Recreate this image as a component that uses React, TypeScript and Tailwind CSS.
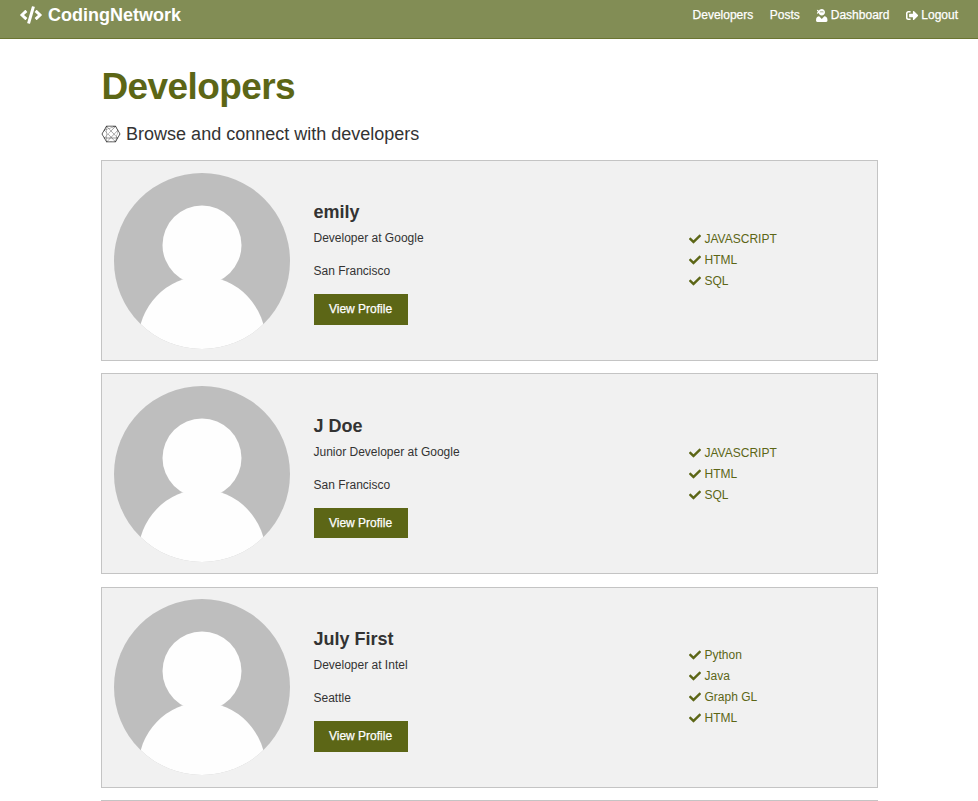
import { FaCode, FaUserNinja, FaConnectdevelop, FaCheck, FaSignOutAlt } from "react-icons/fa";

type Profile = { name: string; job: string; place: string; skills: string[] };

const profiles: Profile[] = [
  { name: "emily", job: "Developer at Google", place: "San Francisco", skills: ["JAVASCRIPT", "HTML", "SQL"] },
  { name: "J Doe", job: "Junior Developer at Google", place: "San Francisco", skills: ["JAVASCRIPT", "HTML", "SQL"] },
  { name: "July First", job: "Developer at Intel", place: "Seattle", skills: ["Python", "Java", "Graph GL", "HTML"] },
];

function Avatar() {
  return (
    <svg viewBox="0 0 176 176" className="size-44 shrink-0 rounded-full">
      <rect width="176" height="176" fill="#bebebe" />
      <circle cx="88" cy="72" r="39.5" fill="#fefefe" />
      <ellipse cx="88" cy="170" rx="64" ry="66.5" fill="#fefefe" />
    </svg>
  );
}

function Navbar() {
  return (
    <nav className="flex h-[39px] items-start justify-between border-b border-[#6b7531] bg-[#828d55] px-5 text-white">
      <a className="flex items-center gap-[6px] pt-[4px] text-[18px] leading-[22px] font-bold">
        <FaCode className="h-[18px] w-[22px]" />
        CodingNetwork
      </a>
      <div className="flex gap-[16.5px] pt-[6px] text-xs leading-[18px] [-webkit-text-stroke:0.25px_white]">
        <a>Developers</a>
        <a>Posts</a>
        <a className="flex items-center gap-[3px]">
          <FaUserNinja className="h-[13px] w-[11.5px]" />
          Dashboard
        </a>
        <a className="flex items-center gap-[3px]">
          <FaSignOutAlt className="h-[13px] w-[12.3px]" />
          Logout
        </a>
      </div>
    </nav>
  );
}

function Card({ name, job, place, skills }: Profile) {
  return (
    <article className="mb-[12.42px] flex h-[201px] items-center border border-[#c4c4c4] bg-[#f1f1f1] pl-3">
      <Avatar />
      <div className="ml-6 w-[375px] pt-[2.4px]">
        <h2 className="text-[18px] leading-[28px] font-bold">{name}</h2>
        <p className="mt-[3px] leading-[19px]">{job}</p>
        <p className="mt-[14px] leading-[19px]">{place}</p>
        <button className="mt-[13px] mb-[0.2px] block h-[30.8px] w-[94px] bg-[#5c6616] pb-[0.7px] text-white [-webkit-text-stroke:0.25px_white]">
          View Profile
        </button>
      </div>
      <ul className="pb-[0.8px] text-[#5c6616]">
        {skills.map((s) => (
          <li key={s} className="flex h-[21px] items-center gap-[4px]">
            <FaCheck className="size-3" />
            {s}
          </li>
        ))}
      </ul>
    </article>
  );
}

export default function App() {
  return (
    <div className="h-[801px] overflow-hidden bg-white font-['Liberation_Sans',Arial,sans-serif] text-xs text-[#333]">
      <Navbar />
      <main className="mx-auto w-[777px] pt-[26px]">
        <h1 className="pl-px text-[37px] leading-[44px] font-bold tracking-[-0.6px] text-[#5c6616]">Developers</h1>
        <p className="mt-[11px] mb-[12px] flex h-7 items-center gap-[5.6px] text-[18px]">
          <FaConnectdevelop className="size-5" />
          Browse and connect with developers
        </p>
        {profiles.map((p) => (
          <Card key={p.name} {...p} />
        ))}
        <div className="h-[201px] border border-[#c4c4c4] bg-[#f1f1f1]" />
      </main>
    </div>
  );
}
